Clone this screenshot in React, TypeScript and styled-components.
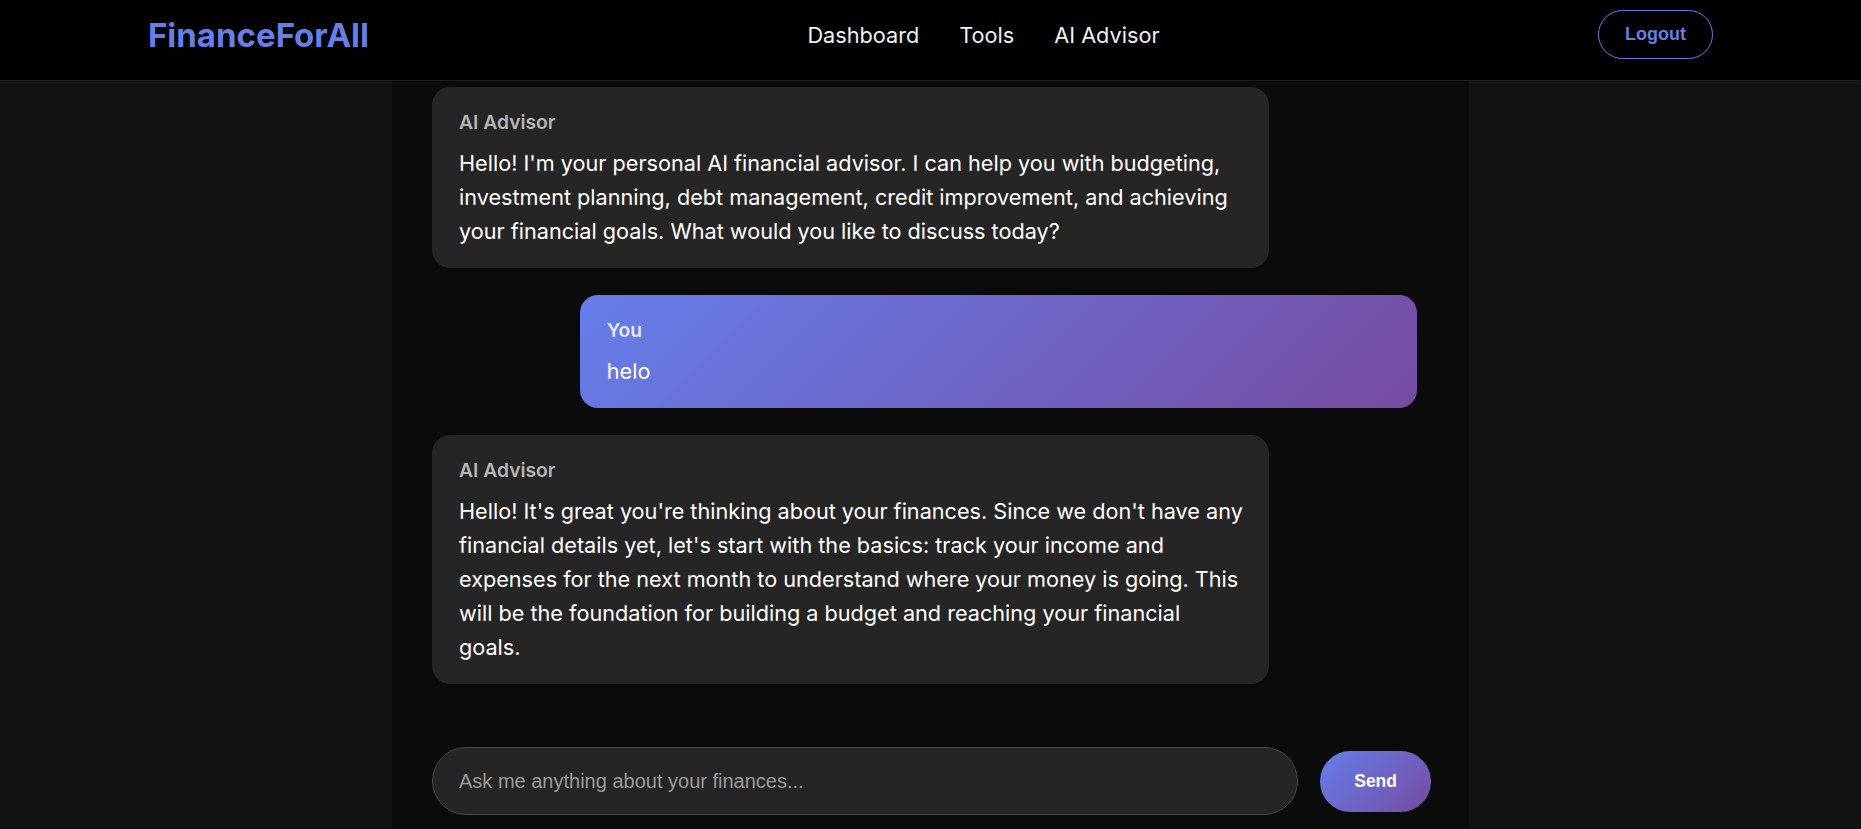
import styled, { createGlobalStyle } from 'styled-components';

const GlobalStyle = createGlobalStyle`
  * {
    box-sizing: border-box;
  }
  html, body {
    margin: 0;
    padding: 0;
    background-color: #121212;
    font-family: 'Inter', 'Noto Sans', sans-serif;
    color: #ffffff;
  }
`;

const Page = styled.div`
  height: 100vh;
  display: flex;
  flex-direction: column;
  overflow: hidden;
`;

const Header = styled.header`
  flex-shrink: 0;
  height: 81px;
  background-color: #000000;
  border-bottom: 1px solid #1e1e1e;
`;

const HeaderInner = styled.div`
  max-width: 1565px;
  height: 100%;
  margin: 0 auto;
  padding-bottom: 11px;
  display: flex;
  align-items: center;
  justify-content: space-between;
`;

const Logo = styled.div`
  font-size: 33px;
  font-weight: 700;
  color: #667eea;
`;

const Nav = styled.nav`
  display: flex;
  align-items: center;
  gap: 0 40px;
`;

const NavLink = styled.a`
  font-size: 21.7px;
  color: #f0f0f0;
  text-decoration: none;
  cursor: pointer;
`;

const LogoutButton = styled.button`
  font-family: 'Liberation Sans', Arial, sans-serif;
  font-size: 18px;
  font-weight: 700;
  color: #667eea;
  background-color: transparent;
  border: 1px solid #667eea;
  border-radius: 25px;
  padding: 13px 26px;
  cursor: pointer;
`;

const ChatColumn = styled.main`
  flex: 1;
  min-height: 0;
  width: 1077px;
  margin: 0 auto;
  background-color: #0b0b0b;
  display: flex;
  flex-direction: column;
`;

const Messages = styled.div`
  flex: 1;
  min-height: 0;
  overflow: hidden;
  padding: 6px 52px 0 40px;
  display: flex;
  flex-direction: column;
  gap: 27px 0;
`;

const Bubble = styled.div<{ $mine?: boolean }>`
  width: 85%;
  align-self: ${(p) => (p.$mine ? 'flex-end' : 'flex-start')};
  padding: 20px 23.5px 20px 27px;
  border-radius: 18px;
  background: ${(p) =>
    p.$mine ? 'linear-gradient(135deg, #667eea 0%, #764ba2 100%)' : '#252525'};
`;

const Sender = styled.div<{ $mine?: boolean }>`
  font-size: 19.3px;
  font-weight: 600;
  line-height: 30px;
  margin-bottom: 9px;
  color: ${(p) => (p.$mine ? 'rgba(255, 255, 255, 0.85)' : '#b5b5b5')};
`;

const Text = styled.div`
  font-size: 21.65px;
  line-height: 34px;
  color: #ffffff;
`;

const InputBar = styled.form`
  flex-shrink: 0;
  display: flex;
  align-items: center;
  gap: 0 22px;
  padding: 0 38px 14px 40px;
`;

const ChatInput = styled.input`
  flex: 1;
  height: 68px;
  padding: 0 26px;
  font-family: 'Liberation Sans', Arial, sans-serif;
  font-size: 20px;
  color: #ffffff;
  background-color: #252525;
  border: 1px solid #474747;
  border-radius: 34px;
  outline: none;

  &::placeholder {
    color: #9a9a9a;
  }
`;

const SendButton = styled.button`
  font-family: 'Liberation Sans', Arial, sans-serif;
  font-size: 17.5px;
  font-weight: 700;
  color: #ffffff;
  background: linear-gradient(135deg, #667eea 0%, #764ba2 100%);
  border: none;
  border-radius: 31px;
  padding: 20px 34px;
  cursor: pointer;
`;

const messages = [
  {
    mine: false,
    text: "Hello! I'm your personal AI financial advisor. I can help you with budgeting, investment planning, debt management, credit improvement, and achieving your financial goals. What would you like to discuss today?",
  },
  { mine: true, text: 'helo' },
  {
    mine: false,
    text: "Hello! It's great you're thinking about your finances. Since we don't have any financial details yet, let's start with the basics: track your income and expenses for the next month to understand where your money is going. This will be the foundation for building a budget and reaching your financial goals.",
  },
];

function App() {
  return (
    <Page>
      <GlobalStyle />
      <Header>
        <HeaderInner>
          <Logo>FinanceForAll</Logo>
          <Nav>
            <NavLink>Dashboard</NavLink>
            <NavLink>Tools</NavLink>
            <NavLink>AI Advisor</NavLink>
          </Nav>
          <LogoutButton>Logout</LogoutButton>
        </HeaderInner>
      </Header>
      <ChatColumn>
        <Messages>
          {messages.map((m, i) => (
            <Bubble key={i} $mine={m.mine}>
              <Sender $mine={m.mine}>{m.mine ? 'You' : 'AI Advisor'}</Sender>
              <Text>{m.text}</Text>
            </Bubble>
          ))}
        </Messages>
        <InputBar onSubmit={(e) => e.preventDefault()}>
          <ChatInput placeholder="Ask me anything about your finances..." />
          <SendButton type="submit">Send</SendButton>
        </InputBar>
      </ChatColumn>
    </Page>
  );
}

export default App;
